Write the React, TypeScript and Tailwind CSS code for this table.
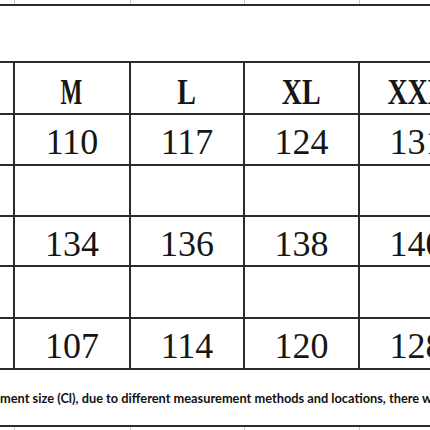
import React from "react";

const cols = ["w-[15px]", "w-[116px]", "w-[114px]", "w-[115px]", "w-[115px]"];

const header = [
  { label: "", cls: "" },
  { label: "M", cls: "scale-x-[0.66]" },
  { label: "L", cls: "scale-x-[0.8]" },
  { label: "XL", cls: "scale-x-[0.8]" },
  { label: "XXL", cls: "scale-x-[0.8]" },
];

const rows: { h: string; values: string[] }[] = [
  { h: "h-[51px]", values: ["", "110", "117", "124", "131"] },
  { h: "h-[51px]", values: ["", "", "", "", ""] },
  { h: "h-[50px]", values: ["", "134", "136", "138", "140"] },
  { h: "h-[52px]", values: ["", "", "", "", ""] },
  { h: "h-[51px]", values: ["", "107", "114", "120", "128"] },
];

function Strip({ top }: { top: boolean }) {
  return (
    <div
      className={`flex ${top ? "h-[6px] border-b-2" : "h-[5px] border-t-2"} border-[#2b2b2b]`}
    >
      {cols.map((w, i) => (
        <div key={i} className={`${w} shrink-0 border-r border-[#c8c8c8]`} />
      ))}
    </div>
  );
}

export default function App() {
  return (
    <div className="w-[430px] h-[430px] overflow-hidden bg-white text-[#161616] font-['Liberation_Serif',serif]">
      <Strip top />

      {/* size table, cut at the right edge like the source image */}
      <div className="mt-[55px] border-t-2 border-[#2b2b2b] w-[475px]">
        <div className="flex h-[52px] border-b-2 border-[#2b2b2b]">
          {header.map((c, i) => (
            <div
              key={i}
              className={`${cols[i]} shrink-0 border-r-2 border-[#2b2b2b] flex items-center justify-center pt-[8px]`}
            >
              <span className={`inline-block text-[35px] leading-none font-bold ${c.cls}`}>
                {c.label}
              </span>
            </div>
          ))}
        </div>
        {rows.map((r, ri) => (
          <div key={ri} className={`flex ${r.h} border-b-2 border-[#2b2b2b]`}>
            {r.values.map((v, i) => (
              <div
                key={i}
                className={`${cols[i]} shrink-0 border-r-2 border-[#2b2b2b] flex items-center justify-center pt-[5px]`}
              >
                <span className="text-[36px] leading-none">{v}</span>
              </div>
            ))}
          </div>
        ))}
      </div>

      <div className="h-[55px] flex items-center overflow-hidden">
        <p className="whitespace-nowrap pt-[3px] font-['Lato',sans-serif] font-bold text-[12.8px] text-[#111]">
          ment size (Cl), due to different measurement methods and locations, there will be an error of 1-3cm
        </p>
      </div>

      <Strip top={false} />
    </div>
  );
}
